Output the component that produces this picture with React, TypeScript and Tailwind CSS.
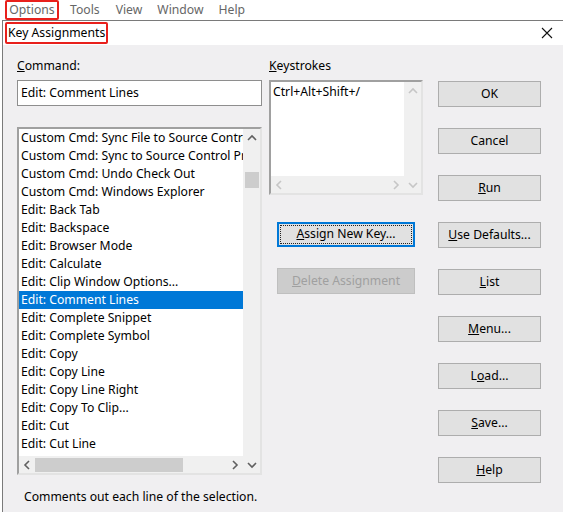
import type { ReactNode } from "react";

const FONT = { fontFamily: '"Noto Sans", "Open Sans", Arial, sans-serif' };

const items = [
  "Custom Cmd: Sync File to Source Control",
  "Custom Cmd: Sync to Source Control Project",
  "Custom Cmd: Undo Check Out",
  "Custom Cmd: Windows Explorer",
  "Edit: Back Tab",
  "Edit: Backspace",
  "Edit: Browser Mode",
  "Edit: Calculate",
  "Edit: Clip Window Options...",
  "Edit: Comment Lines",
  "Edit: Complete Snippet",
  "Edit: Complete Symbol",
  "Edit: Copy",
  "Edit: Copy Line",
  "Edit: Copy Line Right",
  "Edit: Copy To Clip...",
  "Edit: Cut",
  "Edit: Cut Line",
  "Edit: Cut Word Left",
];

function Chevron({ dir, color }: { dir: "up" | "down" | "left" | "right"; color: string }) {
  const pts = {
    up: "1,6 5,2 9,6",
    down: "1,2 5,6 9,2",
    left: "6,1 2,5 6,9",
    right: "2,1 6,5 2,9",
  }[dir];
  const vert = dir === "up" || dir === "down";
  return (
    <svg width={vert ? 10 : 8} height={vert ? 8 : 10} viewBox={vert ? "0 0 10 8" : "0 0 8 10"}>
      <polyline points={pts} fill="none" stroke={color} strokeWidth="1.6" />
    </svg>
  );
}

function Btn({ children, className = "" }: { children: ReactNode; className?: string }) {
  return (
    <div
      className={`h-[26px] flex items-center justify-center bg-[#e1e1e1] border border-[#adadad] text-black ${className}`}
    >
      {children}
    </div>
  );
}

export default function App() {
  return (
    <div className="w-[563px] h-[512px] overflow-hidden bg-white flex flex-col" style={FONT}>
      {/* menu bar */}
      <div className="h-[20px] flex items-center text-[12.2px] text-[#666] shrink-0">
        <div className="ml-[5px] w-[54px] h-[20px] border-2 border-[#e8201c] rounded-[2px] flex items-center justify-center">
          Options
        </div>
        <span className="ml-[11px]">Tools</span>
        <span className="ml-[16px]">View</span>
        <span className="ml-[15px]">Window</span>
        <span className="ml-[15px]">Help</span>
      </div>

      {/* dialog */}
      <div className="flex-1 flex">
        <div className="w-[2px] bg-white shrink-0" />
        <div className="flex-1 flex flex-col border-t border-l border-[#7a7a7a] bg-[#f0eff1]">
          {/* title */}
          <div className="h-[24px] bg-white flex items-center justify-between shrink-0">
            <div className="ml-[2px] h-[22px] px-[1px] border-2 border-[#e8201c] rounded-[2px] flex items-center whitespace-nowrap text-[12.2px] text-black">
              Key Assignments
            </div>
            <svg width="12" height="12" viewBox="0 0 12 12" className="mr-[10px]">
              <path d="M1 1 L11 11 M11 1 L1 11" stroke="#111" strokeWidth="1.1" />
            </svg>
          </div>

          {/* body */}
          <div className="flex items-start pl-[14px] pt-[13px] text-[12.2px] text-black">
            {/* left column */}
            <div className="w-[245px] flex flex-col">
              <div className="h-[16px] leading-[16px]">
                <span className="underline">C</span>ommand:
              </div>
              <div className="mt-[6px] h-[26px] bg-white border border-[#8e8e8e] flex items-center pl-[3px]">
                Edit: Comment Lines
              </div>
              <div className="mt-[21px] h-[348px] bg-white border-2 border-[#a0a0a0] border-r-[#e3e3e3] border-b-[#e3e3e3] flex">
                <div className="flex-1 flex flex-col min-w-0">
                  <div className="flex-1 overflow-hidden">
                    {items.map((it) => (
                      <div
                        key={it}
                        className={`h-[18px] leading-[18px] pl-[2px] whitespace-nowrap overflow-hidden ${
                          it === "Edit: Comment Lines" ? "bg-[#0078d7] text-white" : ""
                        }`}
                      >
                        {it}
                      </div>
                    ))}
                  </div>
                  <div className="h-[17px] bg-[#f0f0f0] flex items-center shrink-0">
                    <div className="w-[16px] flex justify-center">
                      <Chevron dir="left" color="#606060" />
                    </div>
                    <div className="w-[148px] h-[14px] bg-[#cdcdcd]" />
                    <div className="flex-1" />
                    <div className="w-[16px] flex justify-center">
                      <Chevron dir="right" color="#606060" />
                    </div>
                  </div>
                </div>
                <div className="w-[17px] bg-[#f0f0f0] flex flex-col items-center shrink-0">
                  <div className="h-[17px] flex items-center">
                    <Chevron dir="up" color="#606060" />
                  </div>
                  <div className="mt-[26px] w-[14px] h-[16px] bg-[#cdcdcd]" />
                  <div className="flex-1" />
                  <div className="h-[17px] flex items-center">
                    <Chevron dir="down" color="#606060" />
                  </div>
                </div>
              </div>
              <div className="mt-[14px] h-[16px] leading-[16px] pl-[7px] whitespace-nowrap">
                Comments out each line of the selection.
              </div>
            </div>

            {/* middle column */}
            <div className="ml-[7px] w-[154px] flex flex-col">
              <div className="h-[16px] leading-[16px]">
                <span className="underline">K</span>eystrokes
              </div>
              <div className="mt-[6px] h-[115px] bg-white border-2 border-[#a0a0a0] border-r-[#e3e3e3] border-b-[#e3e3e3] flex">
                <div className="flex-1 flex flex-col">
                  <div className="flex-1 pl-[2px] pt-[1px] leading-[18px]">Ctrl+Alt+Shift+/</div>
                  <div className="h-[17px] bg-[#f0f0f0] flex items-center justify-between px-[4px]">
                    <Chevron dir="left" color="#c6c6c6" />
                    <Chevron dir="right" color="#c6c6c6" />
                  </div>
                </div>
                <div className="w-[17px] bg-[#f0f0f0] flex flex-col items-center justify-between">
                  <div className="h-[17px] flex items-center">
                    <Chevron dir="up" color="#c6c6c6" />
                  </div>
                  <div className="h-[17px] flex items-center">
                    <Chevron dir="down" color="#c6c6c6" />
                  </div>
                </div>
              </div>
              <div className="mt-[27px] ml-[8px] w-[138px] h-[25px] bg-[#e1e1e1] border-2 border-[#0078d7] p-[1px] flex">
                <div className="flex-1 border border-dotted border-[#222] flex items-center justify-center">
                  <span>
                    <span className="underline">A</span>ssign New Key...
                  </span>
                </div>
              </div>
              <Btn className="mt-[21px] ml-[8px] w-[138px] !bg-[#cccccc] !border-[#bfbfbf] !text-[#a0a0a0]">
                <span>
                  <span className="underline">D</span>elete Assignment
                </span>
              </Btn>
            </div>

            {/* right column */}
            <div className="ml-[15px] w-[103px] flex flex-col gap-[21px] pt-[23px]">
              <Btn>OK</Btn>
              <Btn>Cancel</Btn>
              <Btn>
                <span>
                  <span className="underline">R</span>un
                </span>
              </Btn>
              <Btn>
                <span>
                  <span className="underline">U</span>se Defaults...
                </span>
              </Btn>
              <Btn>
                <span>
                  <span className="underline">L</span>ist
                </span>
              </Btn>
              <Btn>
                <span>
                  <span className="underline">M</span>enu...
                </span>
              </Btn>
              <Btn>
                <span>
                  L<span className="underline">o</span>ad...
                </span>
              </Btn>
              <Btn>
                <span>
                  <span className="underline">S</span>ave...
                </span>
              </Btn>
              <Btn>
                <span>
                  <span className="underline">H</span>elp
                </span>
              </Btn>
            </div>
          </div>
        </div>
      </div>
    </div>
  );
}
